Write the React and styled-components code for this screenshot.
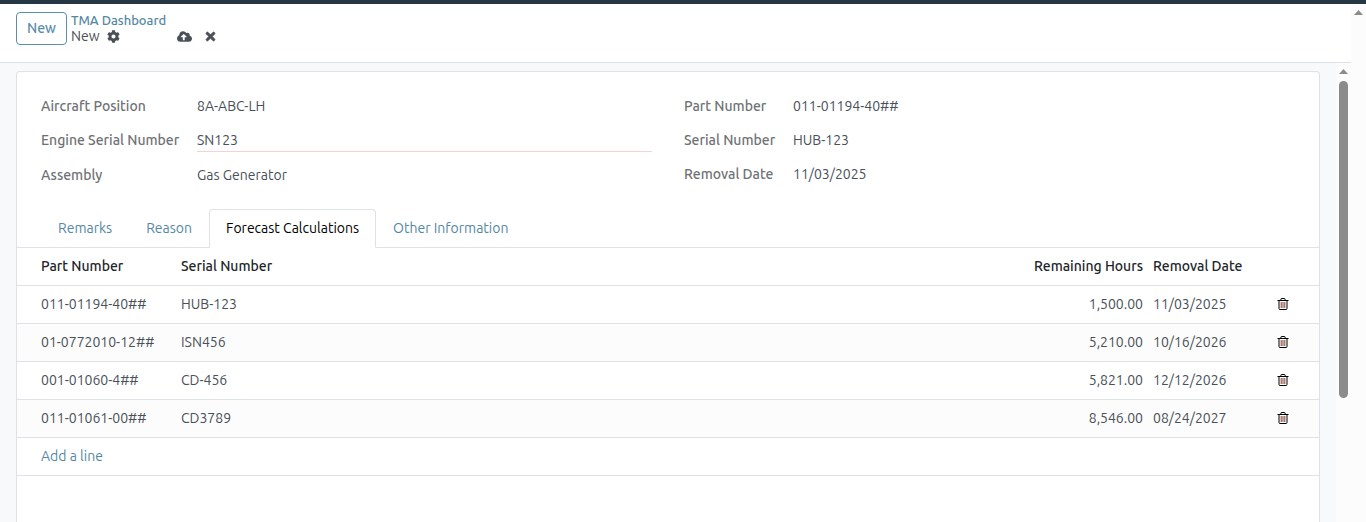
import React, { useState } from 'react';
import styled, { createGlobalStyle } from 'styled-components';
import { FaCog, FaCloudUploadAlt, FaTimes } from 'react-icons/fa';

const leftFields = [
  { id: 'aircraft_position', label: 'Aircraft Position', value: '8A-ABC-LH' },
  { id: 'engine_serial', label: 'Engine Serial Number', value: 'SN123', required: true },
  { id: 'assembly', label: 'Assembly', value: 'Gas Generator' },
];

const rightFields = [
  { id: 'part_number', label: 'Part Number', value: '011-01194-40##' },
  { id: 'serial_number', label: 'Serial Number', value: 'HUB-123' },
  { id: 'removal_date', label: 'Removal Date', value: '11/03/2025' },
];

const tabs = ['Remarks', 'Reason', 'Forecast Calculations', 'Other Information'];

const lines = [
  { part: '011-01194-40##', serial: 'HUB-123', hours: '1,500.00', date: '11/03/2025' },
  { part: '01-0772010-12##', serial: 'ISN456', hours: '5,210.00', date: '10/16/2026' },
  { part: '001-01060-4##', serial: 'CD-456', hours: '5,821.00', date: '12/12/2026' },
  { part: '011-01061-00##', serial: 'CD3789', hours: '8,546.00', date: '08/24/2027' },
];

const ArrowUp = () => (
  <svg width="9" height="5" viewBox="0 0 9 5" aria-hidden="true">
    <path d="M4.5 0 L9 5 H0 Z" fill="#8b8b8b" />
  </svg>
);

const Trash = () => (
  <svg width="12" height="13" viewBox="0 0 12 13" fill="none" stroke="#000" aria-hidden="true">
    <path d="M0.5 2.5 H11.5" />
    <path d="M3.5 2.5 L4.3 0.5 H7.7 L8.5 2.5" />
    <path d="M2 2.5 V10.5 Q2 11.5 3 11.5 H9 Q10 11.5 10 10.5 V2.5" />
    <path d="M4.2 4 V10 M6 4 V10 M7.8 4 V10" stroke="#85452f" />
  </svg>
);

const FieldGroup = ({ fields, labelWidth }) => (
  <Group $labelWidth={labelWidth}>
    {fields.map((field) => (
      <React.Fragment key={field.id}>
        <FieldLabel htmlFor={field.id}>{field.label}</FieldLabel>
        <FieldInput id={field.id} defaultValue={field.value} $required={field.required} />
      </React.Fragment>
    ))}
  </Group>
);

const App = () => {
  const [activeTab, setActiveTab] = useState('Forecast Calculations');

  return (
    <Page>
      <GlobalStyle />
      <NavStrip />
      <Main>
        <Content>
          <ControlPanel>
            <NewButton type="button">New</NewButton>
            <Breadcrumb>
              <BreadcrumbLink href="#">TMA Dashboard</BreadcrumbLink>
              <BreadcrumbRow>
                <span>New</span>
                <IconButton type="button" aria-label="Actions"><FaCog size={13} /></IconButton>
                <StatusButtons>
                  <IconButton type="button" aria-label="Save"><FaCloudUploadAlt size={15} /></IconButton>
                  <IconButton type="button" aria-label="Discard">
                    <FaTimes size={13} stroke="currentColor" strokeWidth="30" />
                  </IconButton>
                </StatusButtons>
              </BreadcrumbRow>
            </Breadcrumb>
          </ControlPanel>
          <FormArea>
            <SheetWrapper>
              <Sheet>
                <Fields>
                  <FieldGroup fields={leftFields} labelWidth="156px" />
                  <FieldGroup fields={rightFields} labelWidth="109px" />
                </Fields>
                <Tabs role="tablist">
                  {tabs.map((tab) => (
                    <Tab
                      key={tab}
                      type="button"
                      role="tab"
                      aria-selected={tab === activeTab}
                      $active={tab === activeTab}
                      onClick={() => setActiveTab(tab)}
                    >
                      {tab}
                    </Tab>
                  ))}
                </Tabs>
                <Table>
                  <colgroup>
                    <Col $width="159px" />
                    <col />
                    <Col $width="140px" />
                    <Col $width="112px" />
                    <Col $width="59px" />
                  </colgroup>
                  <thead>
                    <tr>
                      <HeadCell>Part Number</HeadCell>
                      <HeadCell>Serial Number</HeadCell>
                      <HeadCell $right>Remaining Hours</HeadCell>
                      <HeadCell>Removal Date</HeadCell>
                      <HeadCell />
                    </tr>
                  </thead>
                  <tbody>
                    {lines.map((line, index) => (
                      <Row key={line.part} $striped={index % 2 === 1}>
                        <Cell>{line.part}</Cell>
                        <Cell>{line.serial}</Cell>
                        <Cell $right>{line.hours}</Cell>
                        <Cell>{line.date}</Cell>
                        <Cell>
                          <DeleteButton type="button" aria-label="Delete row"><Trash /></DeleteButton>
                        </Cell>
                      </Row>
                    ))}
                    <tr>
                      <Cell colSpan={5}><AddLink href="#">Add a line</AddLink></Cell>
                    </tr>
                  </tbody>
                </Table>
              </Sheet>
            </SheetWrapper>
            <Scrollbar>
              <ArrowUp />
              <Thumb />
            </Scrollbar>
          </FormArea>
        </Content>
        <Scrollbar>
          <ArrowUp />
        </Scrollbar>
      </Main>
    </Page>
  );
};

const GlobalStyle = createGlobalStyle`
  * {
    box-sizing: border-box;
  }

  body {
    margin: 0;
    background-color: #fff;
    color: #495057;
    font-family: Ubuntu, "Noto Sans", sans-serif;
    font-size: 14px;
    line-height: 21px;
  }

  button, input {
    font: inherit;
    color: inherit;
  }
`;

const Page = styled.div`
  display: flex;
  flex-direction: column;
  height: 100vh;
  overflow: hidden;
`;

const NavStrip = styled.div`
  flex: none;
  height: 4px;
  background-color: #243742;
`;

const Main = styled.div`
  display: flex;
  flex: 1;
  min-height: 0;
`;

const Content = styled.div`
  display: flex;
  flex-direction: column;
  flex: 1;
  min-width: 0;
`;

const ControlPanel = styled.header`
  display: flex;
  align-items: flex-start;
  flex: none;
  gap: 4px;
  height: 59px;
  padding: 8px 16px;
  border-bottom: 1px solid #dee2e6;
`;

const NewButton = styled.button`
  height: 33px;
  padding: 0 10px;
  border: 1px solid #5a8ea9;
  border-radius: 4px;
  background-color: #fff;
  color: #5a8ea9;
  font-weight: 500;
  cursor: pointer;
`;

const Breadcrumb = styled.nav`
  display: flex;
  flex-direction: column;
  line-height: 16px;
`;

const BreadcrumbLink = styled.a`
  color: #5488a3;
  font-size: 13px;
  font-weight: 500;
  text-decoration: none;
`;

const BreadcrumbRow = styled.div`
  display: flex;
  align-items: center;
`;

const IconButton = styled.button`
  display: flex;
  padding: 0;
  margin-left: 7px;
  border: none;
  background: none;
  cursor: pointer;
`;

const StatusButtons = styled.div`
  display: flex;
  align-items: center;
  gap: 5px;
  margin-left: 50px;
`;

const FormArea = styled.main`
  display: flex;
  flex: 1;
  min-height: 0;
`;

const SheetWrapper = styled.div`
  flex: 1;
  min-width: 0;
  padding: 8px 16px 0;
  background-color: #f8f9fa;
`;

const Sheet = styled.div`
  height: 100%;
  border: 1px solid #dee2e6;
  border-bottom: none;
  border-radius: 4px 4px 0 0;
  background-color: #fff;
`;

const Fields = styled.div`
  display: grid;
  grid-template-columns: 1fr 1fr;
  gap: 32px;
  padding: 22px 24px;
`;

const Group = styled.div`
  display: grid;
  grid-template-columns: ${({ $labelWidth }) => $labelWidth} 1fr;
  row-gap: 10px;
  align-content: start;
`;

const FieldLabel = styled.label`
  color: #6f7275;
  font-weight: 500;
  line-height: 24px;
  white-space: nowrap;
`;

const FieldInput = styled.input`
  width: 100%;
  min-width: 0;
  height: 24px;
  padding: 0;
  margin-bottom: ${({ $required }) => ($required ? '1px' : '0')};
  border: none;
  border-bottom: 1px solid ${({ $required }) => ($required ? '#f3d3d5' : 'transparent')};
  background: none;
  outline: none;
`;

const Tabs = styled.div`
  display: flex;
  padding: 0 24px;
  border-bottom: 1px solid #dee2e6;
`;

const Tab = styled.button`
  height: 39px;
  margin-bottom: -1px;
  padding: 0 16px;
  border: 1px solid ${({ $active }) => ($active ? '#dee2e6' : 'transparent')};
  border-bottom-color: ${({ $active }) => ($active ? '#fff' : 'transparent')};
  border-radius: 4px 4px 0 0;
  background-color: ${({ $active }) => ($active ? '#fff' : 'transparent')};
  color: ${({ $active }) => ($active ? '#000' : '#5488a3')};
  white-space: nowrap;
  cursor: pointer;
`;

const Table = styled.table`
  width: 100%;
  table-layout: fixed;
  border-collapse: separate;
  border-spacing: 0;
`;

const Col = styled.col`
  width: ${({ $width }) => $width};
`;

const Row = styled.tr`
  background-color: ${({ $striped }) => ($striped ? '#fcfcfc' : '#fff')};
`;

const Cell = styled.td`
  height: 38px;
  padding: 0 5px;
  border-bottom: 1px solid #dee2e6;
  text-align: ${({ $right }) => ($right ? 'right' : 'left')};
  white-space: nowrap;

  &:first-child {
    padding-left: 24px;
  }
`;

const HeadCell = styled(Cell).attrs({ as: 'th' })`
  color: #212529;
  font-weight: 500;
`;

const DeleteButton = styled.button`
  display: flex;
  padding: 0;
  margin-left: 12px;
  border: none;
  background: none;
  cursor: pointer;
`;

const AddLink = styled.a`
  color: #5488a3;
  text-decoration: none;
`;

const Scrollbar = styled.div`
  display: flex;
  flex-direction: column;
  align-items: center;
  flex: none;
  gap: 7px;
  width: 15px;
  padding-top: 6px;
  background-color: #fcfcfc;
`;

const Thumb = styled.div`
  width: 9px;
  height: 70%;
  border-radius: 5px;
  background-color: #8b8b8b;
`;

export default App;
